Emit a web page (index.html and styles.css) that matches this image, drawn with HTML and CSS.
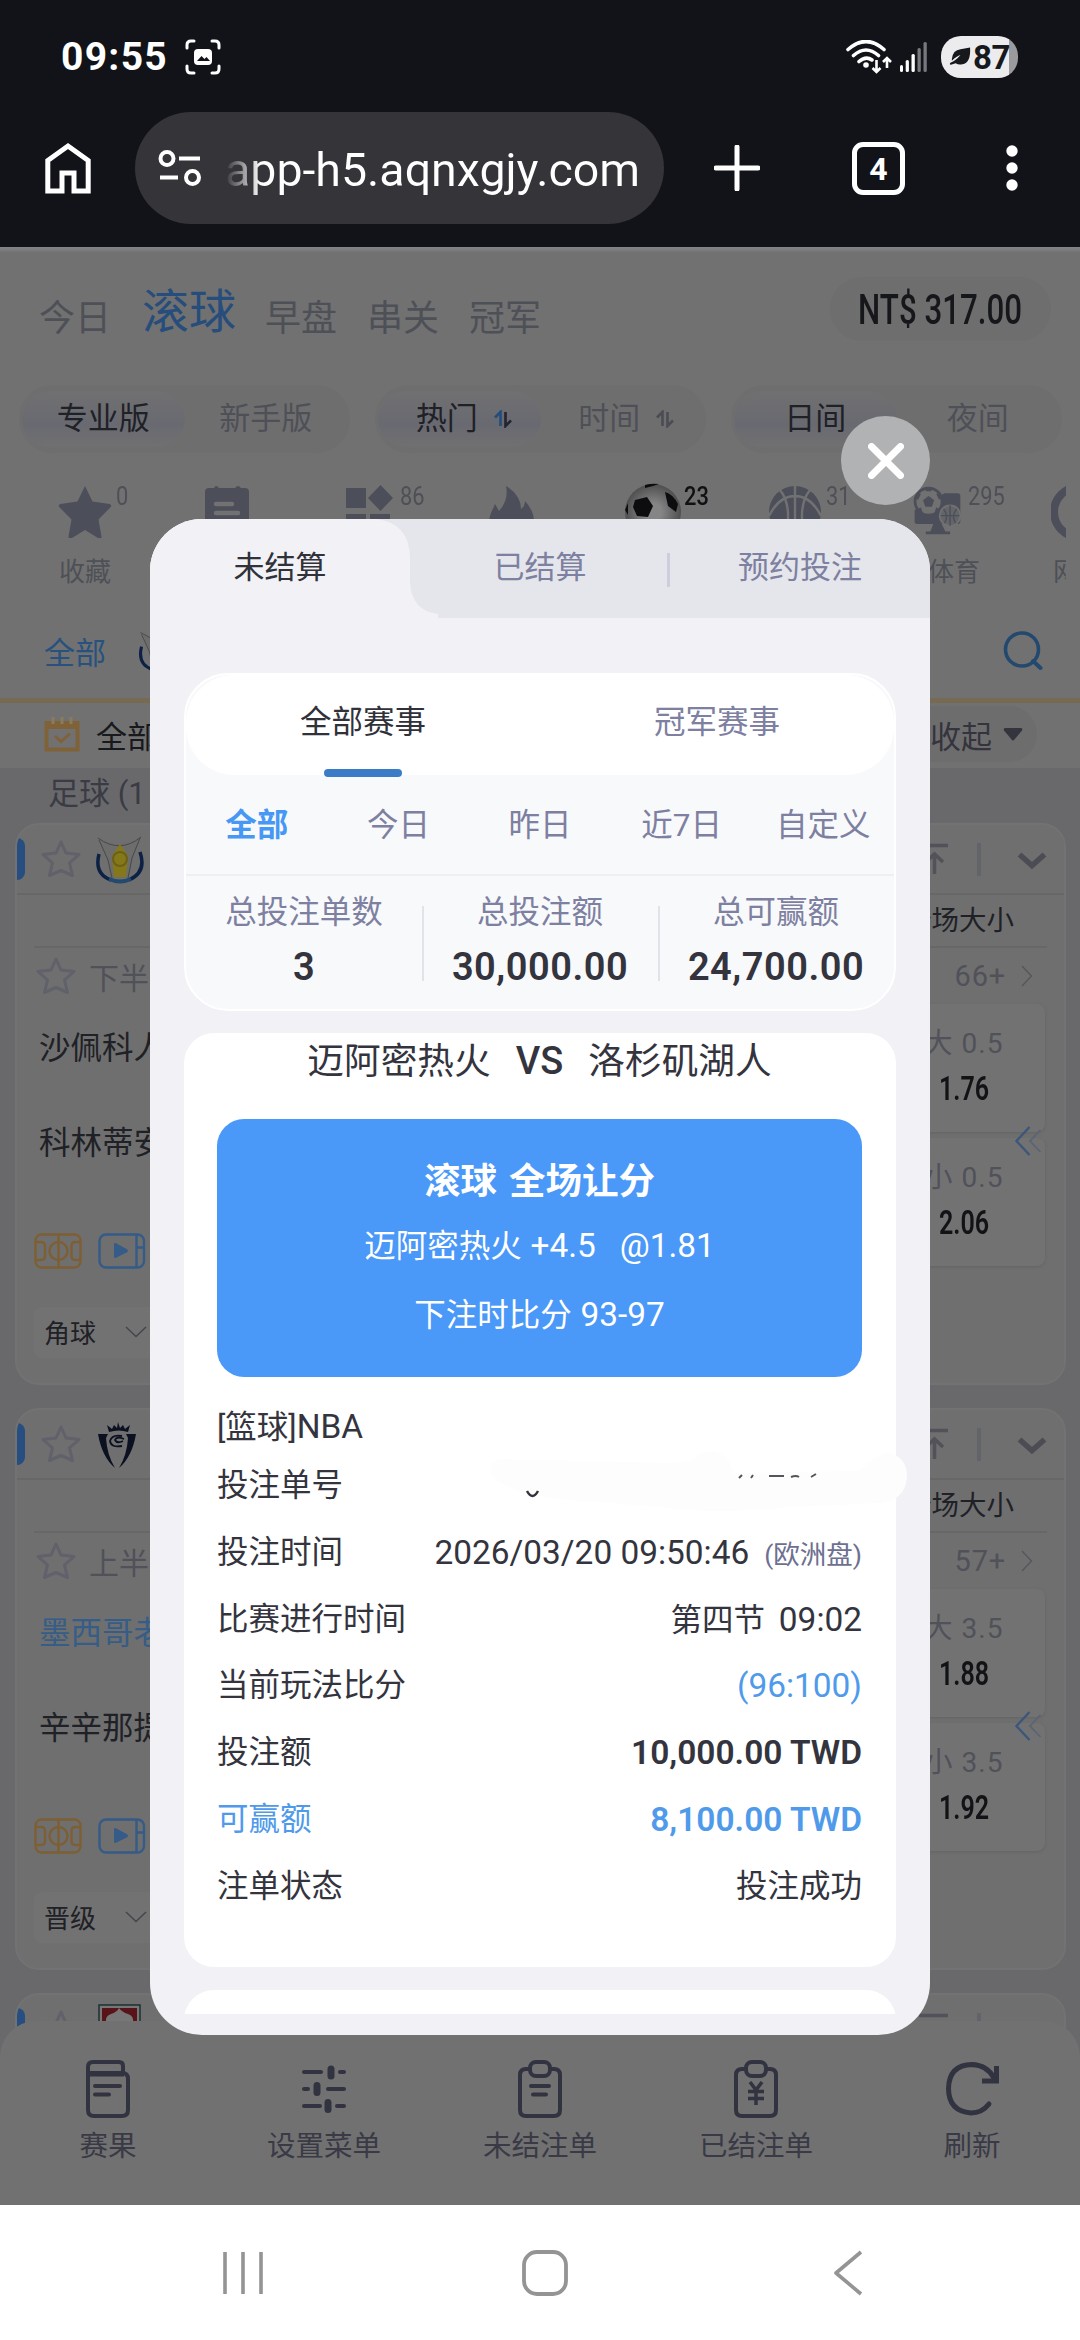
FILE: index.html
```html
<!DOCTYPE html>
<html lang="zh-CN">
<head>
<meta charset="utf-8">
<title>未结算注单</title>
<link rel="stylesheet" href="styles.css">
</head>
<body>
<svg class="defs" width="0" height="0">
  <defs>
    <symbol id="star-o" viewBox="0 0 42 40"><path d="M21 3 L26 14 L39 15.500 L29.500 24 L32.500 36.500 L21 31.500 L9.500 36.500 L12.500 24 L3 15.500 L16 14 Z" fill="none" stroke="currentColor" stroke-width="3" stroke-linejoin="round"/></symbol>
    <symbol id="pitch" viewBox="0 0 48 36"><g fill="none" stroke="currentColor" stroke-width="2.400"><rect x="1.500" y="1.500" width="45" height="33" rx="6"/><path d="M24.500 1.500V34.500M2 9H7Q11 9 11 13V23Q11 27 7 27H2M46 9H41Q37.500 9 37.500 13V23Q37.500 27 41 27H46"/><circle cx="24.500" cy="18" r="9"/></g></symbol>
    <symbol id="video" viewBox="0 0 48 36"><rect x="1.500" y="1.500" width="44.500" height="33" rx="6.500" fill="none" stroke="currentColor" stroke-width="2.400"/><path d="M38.500 2V34M39 14.500h6" stroke="currentColor" stroke-width="2.400"/><path d="M16 11.500q0-2 2-1.200l11 6q2 1.500 0 3l-11 5.500q-2 .8-2-1.200z" fill="currentColor"/></symbol>
    <symbol id="sort" viewBox="0 0 20 18"><path d="M2 7.500L7.500 2V16" fill="none" stroke="var(--up)" stroke-width="2.600"/><path d="M12.500 2V16L18 10.500" fill="none" stroke="var(--down)" stroke-width="2.600"/></symbol>
    <symbol id="totop" viewBox="0 0 34 34"><path d="M3 3.500H32M18.500 32V13M10 20l8.500-8 8.500 8" fill="none" stroke="currentColor" stroke-width="3.500"/></symbol>
    <symbol id="chev" viewBox="0 0 30 20"><path d="M2.500 3.500L15 14.500 27.500 3.500" fill="none" stroke="currentColor" stroke-width="5.500"/></symbol>
    <symbol id="thin-down" viewBox="0 0 22 12"><path d="M1 1L11 10.500 21 1" fill="none" stroke="currentColor" stroke-width="1.400"/></symbol>
    <symbol id="thin-right" viewBox="0 0 12 22"><path d="M1 1L10.500 11 1 21" fill="none" stroke="currentColor" stroke-width="1.300"/></symbol>
    <symbol id="dbl-left" viewBox="0 0 28 32"><path d="M15.500 2L2.500 16 15.500 30" fill="none" stroke="#3c577b" stroke-width="2.400"/><path d="M26.500 5L16 16 26.500 27" fill="none" stroke="#596475" stroke-width="1.800"/></symbol>
  </defs>
</svg>

<header class="browser">
  <div class="status">
    <span class="clock">09:55</span>
    <svg class="shot" viewBox="0 0 36 36"><g fill="none" stroke="#fff" stroke-width="3" stroke-linecap="round"><path d="M2 9V6Q2 2 6 2H9M27 2h3q4 0 4 4v3M34 27v3q0 4-4 4h-3M9 34H6q-4 0-4-4v-3"/></g><rect x="9" y="10" width="18" height="16" rx="4" fill="#fff"/><path d="M12 22l4.500-5 3 3 2-2 3.500 4z" fill="#121318"/></svg>
    <svg class="wifi" viewBox="0 0 46 34"><g fill="none" stroke="#fff" stroke-width="3.600" stroke-linecap="round"><path d="M2 9.500Q20 -6.500 38 9.500M7.500 15.500Q20 4.500 32.500 15.500M13 21.500Q20 15.500 26 20"/></g><circle cx="20" cy="25" r="2.800" fill="#fff"/><path d="M30.500 20V32M26.500 28l4 4 4-4M41 28V18M37 22l4-4 4 4" fill="none" stroke="#fff" stroke-width="2.600"/></svg>
    <svg class="signal" viewBox="0 0 28 30"><g fill="#fff"><rect x="0" y="23" width="3" height="7" rx="1.500"/><rect x="5.700" y="18" width="3.200" height="12" rx="1.500"/><rect x="11.500" y="12" width="3.300" height="18" rx="1.500"/><g fill="#77787b"><rect x="17.500" y="6" width="3.300" height="24" rx="1.500"/><rect x="23.500" y="0" width="3.300" height="30" rx="1.500"/></g></g></svg>
    <span class="battery"><svg viewBox="0 0 24 20"><path d="M3 12Q4 3 12 2L22 0Q23 16 14 17.500 10 18.500 7 16.500L2 18Q0 18 1.500 16 7 14 12 8 8 9 3 14Z" fill="#17181c"/></svg><b>87</b></span>
  </div>
  <div class="toolbar">
    <svg class="home" viewBox="0 0 46 52"><path d="M2.800 18.500L23 4 43.200 18.500V49H29V31H17V49H2.800Z" fill="none" stroke="#fff" stroke-width="5"/></svg>
    <div class="url">
      <svg class="tune" viewBox="0 0 44 36"><g fill="none" stroke="#fff" stroke-width="4"><circle cx="9" cy="8.500" r="6.500"/><path d="M21 8.500H42M2 27.500H20"/><circle cx="34.500" cy="27.500" r="6.500"/></g></svg>
      <span class="addr">app-h5.aqnxgjy.com</span>
    </div>
    <svg class="plus" viewBox="0 0 46 46"><path d="M23 2V44M2 23H44" stroke="#fff" stroke-width="5" stroke-linecap="round"/></svg>
    <span class="tabs">4</span>
    <svg class="more" viewBox="0 0 12 46"><g fill="#fff"><circle cx="6" cy="6" r="5.700"/><circle cx="6" cy="23" r="5.700"/><circle cx="6" cy="40" r="5.700"/></g></svg>
  </div>
</header>

<main class="page">
  <nav class="top">
    <span>今日</span><span class="on">滚球</span><span>早盘</span><span>串关</span><span>冠军</span>
    <span class="balance"><i>NT$ 317.00</i></span>
  </nav>
  <div class="segs">
    <div class="seg"><span class="on">专业版</span><span>新手版</span></div>
    <div class="seg sorts"><span class="on">热门<svg class="sort hot"><use href="#sort"/></svg></span><span>时间<svg class="sort"><use href="#sort"/></svg></span></div>
    <div class="seg"><span class="on">日间</span><span>夜间</span></div>
  </div>
  <div class="sports">
    <div class="sport"><svg viewBox="0 0 56 56"><path d="M28 4l7.500 15.500 17 2.500q3 .8 1 3.300L41.500 37.500l3 17q0 3-3 1.800L28 48 14.500 56.300q-3 1.200-3-1.800l3-17L2.500 25.300q-2-2.500 1-3.300l17-2.500z" fill="#4c4f5a"/></svg><em>0</em><span>收藏</span></div>
    <div class="sport"><svg viewBox="0 0 56 56"><path d="M6 10q0-4 4-4h5q2-4 5 0h16q3-4 6 0h4q4 0 4 4V56H6z" fill="#4c4f5a"/><path d="M17 22h16M17 31h22" stroke="#717171" stroke-width="4.500" stroke-linecap="round"/></svg></div>
    <div class="sport"><svg viewBox="0 0 56 56"><path d="M5 6h20v20H5zM39.500 3L52 16 39.500 29 27 16zM5 32h20v20H5zM29 32h20v20H29z" fill="#4c4f5a"/></svg><em>86</em></div>
    <div class="sport"><svg viewBox="0 0 56 56"><path d="M23 4Q38 13 38 27q4-3 4-8 13 14 7 30l-6 7H13Q2 46 8 31l4-9 4 7Q26 18 23 4z" fill="#4c4f5a"/><path d="M25 56q-3-9 4-18 8 8 4 18z" fill="#717171"/></svg></div>
    <div class="sport live"><svg viewBox="0 0 56 56"><defs><radialGradient id="ball"><stop offset=".3" stop-color="#858585"/><stop offset="1" stop-color="#4f4f4f"/></radialGradient></defs><circle cx="28" cy="30" r="28" fill="url(#ball)"/><path d="M10 18l12-3 6 9-5 11-11-1-4-9zM40 10q8 2 13 12l-2 8-8-6zM20 3q7-2 14-1l-6 2-8 2zM0 28l3-7 0 12z" fill="#0d0d0f"/></svg><em>23</em></div>
    <div class="sport"><svg viewBox="0 0 56 56"><circle cx="28" cy="30" r="26" fill="#4c4f5a"/><path d="M28 4V56M2 34Q12 14 28 14 44 14 54 34M13 8Q26 24 18 56M43 8Q30 24 38 56" fill="none" stroke="#717171" stroke-width="2.400"/></svg><em>31</em></div>
    <div class="sport"><svg viewBox="0 0 56 60"><path d="M36 12H50q3 0 3 3V42q0 3-3 3H33l4 8h5v3H16v-3h5l3-8H7q-3 0-3-3V30z" fill="#4c4f5a"/><circle cx="19" cy="21" r="14.500" fill="#717171" stroke="#4c4f5a" stroke-width="3"/><path d="M19 15l6 4.500-2.500 7h-7l-2.500-7z" fill="#4c4f5a"/><path d="M9 12l-3 6M29 12l3 6M11 34l-2-6M27 34l2-6M16 8h6" stroke="#4c4f5a" stroke-width="4"/><circle cx="42" cy="36" r="11" fill="#646569" stroke="#717171" stroke-width="2"/><path d="M42 25V47M32 36H52M35 29q6 7 1 15M49 29q-6 7-1 15" fill="none" stroke="#4c4f5a" stroke-width="1.500"/></svg><em>295</em><span class="pe">体育</span></div>
    <div class="sport"><svg viewBox="0 0 56 56"><circle cx="28" cy="30" r="25" fill="#717171" stroke="#4c4f5a" stroke-width="8"/></svg><span>网球</span></div>
  </div>
  <div class="leagues">
    <b>全部</b>
    <svg class="crest" viewBox="0 0 50 50"><use href="#crest-a"/></svg>
    <svg class="search" viewBox="0 0 40 40"><circle cx="19" cy="18.500" r="16.500" fill="none" stroke="#24496f" stroke-width="3.600"/><path d="M30 30l7.500 7" stroke="#24496f" stroke-width="4" stroke-linecap="round"/></svg>
  </div>
  <div class="allrow">
    <svg class="cal" viewBox="0 0 38 36"><path d="M3.500 7H34.500V33.500H3.500Z" fill="none" stroke="#806239" stroke-width="4"/><path d="M3 5H35V13H3z" fill="#806239"/><path d="M10 1V8M19 1V8M28 1V8" stroke="#8a7a5e" stroke-width="3"/><path d="M12 20l6 5.500 9-8" fill="none" stroke="#806239" stroke-width="3"/></svg>
    <b>全部</b>
    <span class="fold">收起<svg viewBox="0 0 20 14"><path d="M2 1H18q2 .5 1 2.500L11 13q-1 1-2 0L1 3.500Q0 1.500 2 1z" fill="#34343e"/></svg></span>
  </div>
  <section class="list">
    <h2>足球 (1</h2>

    <article class="match">
      <header><i class="flag"></i><svg class="star"><use href="#star-o"/></svg>
        <svg class="logo" viewBox="0 0 50 50"><g id="crest-a"><path d="M4 20Q-1 40 16 46M45 18Q52 38 34 46" fill="none" stroke="#0d2145" stroke-width="3.500"/><path d="M2 3Q25 18 47 1L38 24 34 44H16L12 24Z" fill="#6d6d6c"/><path d="M4 6L13 26 17 44M45 4L37 24 33 44M3 4Q25 20 46 3" stroke="#484848" fill="none"/><path d="M25 10l8 12-2 21H19l-2-21z" fill="#85781b"/><circle cx="25" cy="25" r="7" fill="none" stroke="#6b6018" stroke-width="2"/><path d="M14 45q11 5 22 0" stroke="#224a6d" stroke-width="4" fill="none"/></g></svg>
        <svg class="totop"><use href="#totop"/></svg><i class="bar"></i><svg class="chev"><use href="#chev"/></svg></header>
      <div class="market">全场大小</div>
      <div class="period"><svg class="star"><use href="#star-o"/></svg><span>下半场</span><b>66+</b><svg class="more-r"><use href="#thin-right"/></svg></div>
      <div class="body">
        <div class="teams"><p>沙佩科人</p><p>科林蒂安</p>
          <div class="media"><svg class="gold"><use href="#pitch"/></svg><svg class="blue"><use href="#video"/></svg></div>
          <div class="drop">角球<svg><use href="#thin-down"/></svg></div></div>
        <div class="odds"><div><span>大 0.5</span><b>1.76</b></div><div><span>小 0.5</span><b>2.06</b></div><svg class="dbl"><use href="#dbl-left"/></svg></div>
      </div>
    </article>

    <article class="match">
      <header><i class="flag"></i><svg class="star"><use href="#star-o"/></svg>
        <svg class="logo" viewBox="0 0 50 50"><path d="M3 15H13L11 19Q12 36 20 49 7 38 3 15zM41 15H31L33 19Q32 36 24 49 37 38 41 15z" fill="#0b1120"/><path d="M14 13L12 6l5 4 2-4 3 3 1-6 2 6 3-3 2 4 5-4-2 7Q24 10 14 13z" fill="#0b1120"/><path d="M27 17Q17 15 15 22q1 7 12 5M29 20q-8-3-9 1 2 4 8 1" fill="none" stroke="#0b1120" stroke-width="1.800"/></svg>
        <svg class="totop"><use href="#totop"/></svg><i class="bar"></i><svg class="chev"><use href="#chev"/></svg></header>
      <div class="market">全场大小</div>
      <div class="period"><svg class="star"><use href="#star-o"/></svg><span>上半场</span><b>57+</b><svg class="more-r"><use href="#thin-right"/></svg></div>
      <div class="body">
        <div class="teams"><p class="lead">墨西哥老</p><p>辛辛那提</p>
          <div class="media"><svg class="gold"><use href="#pitch"/></svg><svg class="blue"><use href="#video"/></svg></div>
          <div class="drop">晋级<svg><use href="#thin-down"/></svg></div></div>
        <div class="odds"><div><span>大 3.5</span><b>1.88</b></div><div><span>小 3.5</span><b>1.92</b></div><svg class="dbl"><use href="#dbl-left"/></svg></div>
      </div>
    </article>

    <article class="match">
      <header><i class="flag"></i><svg class="star"><use href="#star-o"/></svg>
        <svg class="logo" viewBox="0 0 50 50"><rect x="4" y="1" width="41" height="46" fill="#777" stroke="#1c3030" stroke-width="1.500"/><path d="M7 4H42V47H7z" fill="#581419"/><path d="M24 4q3 4 9 6 6 2 5 8H11q-1-6 5-8 6-2 8-6z" fill="#777"/></svg>
        <svg class="totop"><use href="#totop"/></svg><i class="bar"></i><svg class="chev"><use href="#chev"/></svg></header>
    </article>
  </section>

  <footer class="dock">
    <div><svg viewBox="0 0 44 58"><g fill="none" stroke="#323340" stroke-width="4"><path d="M2 13V7Q2 2 7 2H33q4 0 4 4V13M2 13H36q6 0 6 6V50q0 6-6 6H8q-6 0-6-6Z"/><path d="M3 14H38" stroke-width="5"/><path d="M9 26H34M9 34.500H23" stroke-linecap="round"/></g></svg><span>赛果</span></div>
    <div><svg viewBox="0 0 44 58"><g fill="none" stroke="#323340" stroke-width="4" stroke-linecap="round"><path d="M2 12H19M38 12h4M2 29h4M26 29H42M2 46H18M35 46h7"/><g stroke-width="7"><path d="M29 9v7M15 25.500v7M26 42.500v7"/></g></g></svg><span>设置菜单</span></div>
    <div><svg viewBox="0 0 44 58"><g fill="none" stroke="#323340" stroke-width="4"><path d="M12 9H8Q2 9 2 15V50q0 6 6 6H36q6 0 6-6V15q0-6-6-6H32"/><rect x="12" y="2" width="20" height="14" rx="6"/><path d="M13 26H31M15 34.500H28" stroke-linecap="round"/></g></svg><span>未结注单</span></div>
    <div><svg viewBox="0 0 44 58"><g fill="none" stroke="#323340" stroke-width="4"><path d="M12 9H8Q2 9 2 15V50q0 6 6 6H36q6 0 6-6V15q0-6-6-6H32"/><rect x="12" y="2" width="20" height="14" rx="6"/><path d="M16 22l6 8 6-8M14 31.500H30M14 38.500H30M22 30V45" stroke-width="3.500"/></g></svg><span>已结注单</span></div>
    <div><svg class="wide" viewBox="0 0 54 58"><path d="M44 44Q37 53 26 53 3.500 51 3.500 28.500 4 5 27 4.500 42 5 49 18" fill="none" stroke="#323340" stroke-width="5" stroke-linecap="round"/><path d="M51.500 6V21H37" fill="none" stroke="#323340" stroke-width="5"/></svg><span>刷新</span></div>
  </footer>

  <button class="close"><svg viewBox="0 0 36 36"><path d="M3.500 3.500L32.500 32.500M32.500 3.500L3.500 32.500" stroke="#fff" stroke-width="7" stroke-linecap="round"/></svg></button>

  <div class="modal">
    <div class="mtabs">
      <svg class="curve" viewBox="0 0 290 100"><path d="M0 0H226Q260 4 260 40V64Q262 92 288 95V100H0Z" fill="#f1f1f6"/></svg>
      <span class="on">未结算</span><span>已结算</span><span>预约投注</span><i></i>
    </div>
    <section class="summary">
      <div class="kinds"><span class="on">全部赛事</span><span>冠军赛事</span></div>
      <div class="days"><span class="on">全部</span><span>今日</span><span>昨日</span><span>近7日</span><span>自定义</span></div>
      <div class="sums">
        <div><span>总投注单数</span><b>3</b></div><div><span>总投注额</span><b>30,000.00</b></div><div><span>总可赢额</span><b>24,700.00</b></div>
      </div>
    </section>
    <div class="bets">
      <section class="bet">
        <h1><span>迈阿密热火</span><b>VS</b><span>洛杉矶湖人</span></h1>
        <div class="pick"><strong>滚球 全场让分</strong><p>迈阿密热火 <i>+4.5</i> <i class="at">@1.81</i></p><p>下注时比分 <i>93-97</i></p></div>
        <div class="league">[篮球]<i>NBA</i></div>
        <dl>
          <div><dt>投注单号</dt><dd></dd></div>
          <div><dt>投注时间</dt><dd><i>2026/03/20 09:50:46</i><small>(欧洲盘)</small></dd></div>
          <div><dt>比赛进行时间</dt><dd>第四节 <i class="min">09:02</i></dd></div>
          <div><dt>当前玩法比分</dt><dd class="hl"><i>(96:100)</i></dd></div>
          <div><dt>投注额</dt><dd><b>10,000.00 TWD</b></dd></div>
          <div class="hl"><dt>可赢额</dt><dd><b>8,100.00 TWD</b></dd></div>
          <div><dt>注单状态</dt><dd>投注成功</dd></div>
        </dl>
        <svg class="scribble" viewBox="0 0 420 62"><path d="M2 22Q-1 10 12 8L180 12Q205 12 212 2 230 -4 240 10L244 22 370 20Q388 2 400 2 418 6 418 26 416 50 390 52L300 56Q230 64 170 56L70 48Q10 40 2 22Z" fill="#fdfdfe"/><path d="M38 40q5.500 10 11 0" fill="none" stroke="#33343c" stroke-width="2.500"/><path d="M250 27l3-3M262 27l2-3M280 25h15M302 26q5-2 8 0M322 26l5-3" fill="none" stroke="#55565c" stroke-width="2"/></svg>
      </section>
      <section class="bet next"></section>
    </div>
  </div>
</main>

<nav class="sysnav">
  <svg class="recents" viewBox="0 0 40 44"><path d="M2 1V43M20 1V43M38 1V43" stroke="#949494" stroke-width="3.600"/></svg>
  <svg class="hm" viewBox="0 0 46 46"><rect x="2" y="2" width="42" height="42" rx="13" fill="none" stroke="#949494" stroke-width="3.800"/></svg>
  <svg class="bk" viewBox="0 0 30 46"><path d="M28 2L3 23 28 44" fill="none" stroke="#949494" stroke-width="3.600" stroke-linejoin="round"/></svg>
</nav>
</body>
</html>
```

FILE: styles.css
```css
* { box-sizing: border-box; margin: 0; padding: 0; }
body { width: 1080px; height: 2340px; overflow: hidden; background: #fff; font-family: Roboto, "Noto Sans CJK SC", sans-serif; font-size: 31.500px; color: #33343e; }
i, em { font-style: normal; }
svg { display: block; flex: none; }
.defs { position: absolute; }

/* browser chrome */
.browser { height: 247px; background: #121318; color: #fff; }
.status { display: flex; align-items: center; height: 112px; padding: 2px 62px 0 61px; }
.clock { font-size: 39px; font-weight: 700; width: 124px; letter-spacing: 1.3px; }
.shot { width: 36px; height: 36px; }
.wifi { width: 46px; height: 34px; margin-left: auto; }
.signal { width: 28px; height: 30px; margin-left: 8px; }
.battery { display: flex; align-items: center; justify-content: center; width: 77px; height: 42px; margin-left: 13px; border-radius: 20px; background: linear-gradient(90deg, #ececee 88%, #9b9b9d 88%); color: #17181c; font-size: 33px; letter-spacing: -.5px; }
.battery svg { width: 23px; height: 20px; margin-right: 1px; }
.toolbar { display: flex; align-items: center; height: 112px; padding: 0 62px 0 45px; }
.home { width: 46px; height: 52px; }
.url { display: flex; align-items: center; width: 529px; height: 112px; margin-left: 44px; padding-left: 23px; border-radius: 56px; background: #343439; overflow: hidden; }
.tune { width: 44px; height: 36px; }
.addr { margin-left: 23px; font-size: 46.500px; line-height: 60px; padding-top: 3px; white-space: nowrap; background: linear-gradient(90deg, #343439, #fff 36px); -webkit-background-clip: text; background-clip: text; color: transparent; }
.plus { width: 46px; height: 46px; margin-left: 50px; }
.tabs { width: 53px; height: 53px; margin-left: 92px; border: 5px solid #fff; border-radius: 11px; font-size: 32px; font-weight: 700; line-height: 44px; text-align: center; }
.more { width: 12px; height: 46px; margin-left: auto; }

/* dimmed page behind the dialog */
.page { position: relative; height: 1958px; overflow: hidden; background: linear-gradient(#858688, #7a7b7d 3px, #717171 6px); color: #44464f; }
.top { display: flex; align-items: flex-start; height: 138px; padding: 33px 29px 0 39px; font-size: 36px; line-height: 79px; color: #4e5057; }
.top > span { margin-right: 30px; }
.top > .on { font-size: 47px; line-height: 64px; color: #264d7b; margin: 0 29px 0 1px; }
.top > .balance { width: 221px; height: 64px; margin: -3px 0 0 auto; border-radius: 32px; background: #6e6e6f; color: #16171b; text-align: center; font-size: 42px; line-height: 66px; font-weight: 500; }
.balance i { display: inline-block; margin: 0 -40px; transform: scaleX(.745); white-space: nowrap; }
.segs { display: flex; gap: 25px; padding-left: 19px; }
.seg { display: flex; width: 331px; height: 68px; padding: 6px 3px; border-radius: 34px; background: #6e6e6f; font-size: 31px; line-height: 56px; }
.seg > span { flex: 1; display: flex; justify-content: center; align-items: center; color: #4e5057; }
.seg > .on { border-radius: 28px; background: linear-gradient(#707071, #696a71 60%, #707071); color: #202127; }
.sorts > span { padding-left: 10px; }
.sort { width: 20px; height: 18px; margin-left: 15px; --up: #4b4c54; --down: #4b4c54; }
.sort.hot { --up: #244c7c; --down: #22242f; }
.sports { display: flex; width: 1066px; height: 148px; margin-top: 28px; padding-left: 14px; overflow: hidden; }
.sport { position: relative; flex: none; width: 142px; text-align: center; font-size: 26px; color: #4e5057; }
.sport svg { width: 56px; height: 56px; margin: 1px auto 0; }
.sport em { position: absolute; left: 102px; top: 0; font-size: 26px; line-height: 30px; transform: scaleX(.84); transform-origin: 0 0; }
.sport.live em { color: #101114; font-weight: 500; }
.sport span { display: block; margin-top: 18px; line-height: 32px; }
.sport .pe { margin-left: 34px; }
.leagues { display: flex; align-items: center; height: 90px; padding: 0 37px 10px 44px; border-bottom: 5px solid #776a52; color: #28517f; margin-top: -16px; }
.leagues b, .allrow b { font-weight: 400; font-size: 31px; }
.crest { width: 50px; height: 44px; margin-left: 29px; }
.search { width: 40px; height: 40px; margin-left: auto; }
.allrow { display: flex; align-items: center; height: 65px; padding: 0 43px 3px; color: #18191d; }
.cal { width: 38px; height: 36px; }
.allrow b { margin-left: 15px; }
.fold { display: flex; align-items: center; height: 56px; margin-left: auto; padding: 0 14px 0 60px; border-radius: 28px; background: #6d6d6d; color: #34343e; font-size: 31px; }
.fold svg { width: 20px; height: 14px; margin-left: 11px; }
.list { height: 1400px; background: #69696b; overflow: hidden; }
.list h2 { padding-left: 48px; font-size: 31px; line-height: 51px; height: 55px; font-weight: 400; color: #3a3b45; }
.match { width: 1051px; height: 562px; margin: 0 0 23px 15px; border: 2px solid #727273; border-radius: 24px; background: #6f6f6f; overflow: hidden; }
.match header { display: flex; align-items: center; height: 70px; border-bottom: 2px solid #676768; color: #585961; }
.flag { width: 8px; height: 42px; background: #264e80; border-radius: 0 10px 10px 0; }
.star { width: 42px; height: 40px; color: #60616a; }
.match header .star { margin-left: 15px; }
.logo { width: 50px; height: 50px; margin-left: 13px; }
.totop { width: 34px; height: 34px; margin-left: auto; color: #51525a; }
.bar { width: 4px; height: 33px; margin-left: 27px; background: #63646a; }
.chev { width: 30px; height: 20px; margin: 4px 17px 0 36px; color: #4c4d54; }
.market { height: 53px; margin: 0 17px; padding-right: 33px; border-bottom: 2px solid #676768; text-align: right; font-size: 27.500px; line-height: 52px; color: #202126; }
.period { display: flex; align-items: center; height: 56px; padding: 0 31px 1px 18px; font-size: 30px; color: #505159; }
.period span { margin-left: 12px; }
.period b { margin-left: auto; font-weight: 400; font-size: 29px; letter-spacing: .8px; }
.more-r { width: 12px; height: 22px; margin-left: 15px; color: #55565d; }
.body { display: flex; justify-content: space-between; padding: 0 19px 0 17px; }
.teams p { height: 95px; padding-left: 5px; font-size: 31.500px; line-height: 90px; color: #202126; }
.teams .lead { color: #365d87; }
.media { display: flex; gap: 16px; margin-top: 39px; }
.media svg { width: 48px; height: 36px; }
.gold { color: #7d5f33; }
.blue { color: #355b88; }
.drop { display: flex; align-items: center; width: 160px; height: 51px; margin-top: 38px; padding: 0 0 2px 10px; border-radius: 8px; background: #727272; font-size: 26px; color: #202126; }
.drop svg { width: 22px; height: 12px; margin-left: 29px; color: #44454c; }
.odds { position: relative; width: 162px; }
.odds div { height: 128px; margin-bottom: 6px; padding-top: 22px; border-radius: 8px; background: #727272; box-shadow: 0 1px 3px #646466; text-align: center; color: #505159; }
.odds span { display: block; font-size: 28px; line-height: 36px; letter-spacing: 1px; }
.odds b { display: block; margin-top: 7px; font-size: 33px; line-height: 40px; font-weight: 600; color: #121316; transform: scaleX(.76); }
.dbl { position: absolute; right: 3px; top: 121px; width: 28px; height: 32px; }
.dock { position: absolute; left: 0; right: 0; bottom: 0; display: flex; height: 184px; padding-top: 39px; border-radius: 36px 36px 0 0; background: #717171; color: #393a46; }
.dock div { flex: 1; text-align: center; font-size: 28.500px; line-height: 40px; }
.dock svg { width: 44px; height: 58px; margin: 0 auto 9px; }
.dock .wide { width: 54px; }

/* dialog */
.close { position: absolute; left: 841px; top: 169px; display: grid; place-items: center; width: 89px; height: 89px; border: 0; border-radius: 50%; background: #b1b2b3; }
.close svg { width: 36px; height: 36px; }
.modal { position: absolute; left: 150px; top: 272px; width: 780px; height: 1516px; border-radius: 52px; background: #f1f1f6; overflow: hidden; color: #33343e; }
.mtabs { position: relative; display: flex; height: 99px; background: #e5e6eb; font-size: 31px; line-height: 97px; text-align: center; color: #7d80a0; }
.mtabs span { position: relative; flex: 1; }
.mtabs .on { color: #303139; }
.curve { position: absolute; left: 0; top: 0; width: 290px; height: 100px; }
.mtabs i { position: absolute; left: 517px; top: 34px; width: 3px; height: 34px; background: #cccedd; }
.summary { width: 712px; height: 338px; margin: 55px 34px 22px; border: 2px solid #fff; border-radius: 44px; background: #f8f9fb; overflow: hidden; color: #7d80a0; text-align: center; }
.kinds { display: flex; height: 100px; border-radius: 48px; background: #fff; line-height: 95px; }
.kinds span { position: relative; flex: 1; }
.kinds .on { color: #303139; }
.kinds .on::after { content: ""; position: absolute; left: 138px; bottom: -2px; width: 78px; height: 8px; border-radius: 4px; background: #3b7cc8; }
.days { display: flex; height: 101px; border-bottom: 2px solid #efeff3; line-height: 101px; }
.days span { flex: 1; }
.days .on { color: #4797f5; font-weight: 700; }
.sums { display: flex; padding-top: 16px; }
.sums div { position: relative; flex: 1; }
.sums div + div::before { content: ""; position: absolute; left: 0; top: 14px; width: 2px; height: 75px; background: #e2e3ea; }
.sums span { display: block; line-height: 42px; }
.sums b { display: block; margin-top: 10px; font-size: 38px; line-height: 46px; font-weight: 600; letter-spacing: .5px; color: #33343e; }
.bets { height: 981px; padding: 0 34px; overflow: hidden; }
.bet { position: relative; height: 934px; margin-bottom: 23px; padding: 0 34px 0 33px; border-radius: 30px; background: #fff; }
.bet h1 { display: flex; justify-content: center; align-items: center; gap: 25px; height: 86px; padding-bottom: 29px; font-size: 36.700px; line-height: 57px; font-weight: 400; }
.bet h1 b { font-weight: 500; font-size: 38px; }
.pick { height: 258px; padding-top: 36px; border-radius: 27px; background: #4a98f8; color: #fff; text-align: center; font-size: 31.500px; }
.pick strong { display: block; font-size: 36.500px; line-height: 54px; font-weight: 700; word-spacing: 3px; }
.pick p { margin-top: 5px; line-height: 63px; word-spacing: 1px; }
.pick p + p { margin-top: 5px; }
.pick i, .bet dd i, .league i { font-size: 33.400px; }
.pick .at { margin-left: 15px; }
.league { height: 59px; margin-top: 20px; line-height: 59px; }
.bet dl > div { display: flex; justify-content: space-between; height: 66.800px; line-height: 60px; }
.bet dd b { font-size: 33.500px; font-weight: 600; }
.bet small { margin-left: 15px; font-size: 26.500px; color: #6d7090; }
.bet .min { margin-left: 6px; }
.bet .hl { color: #4f9aea; }
.scribble { position: absolute; left: 305px; top: 418px; width: 420px; height: 62px; }

/* system navigation */
.sysnav { display: flex; align-items: center; height: 135px; background: #fff; }
.recents { width: 40px; height: 44px; margin-left: 223px; }
.hm { width: 46px; height: 46px; margin-left: 259px; }
.bk { width: 30px; height: 46px; margin-left: 265px; }
```
